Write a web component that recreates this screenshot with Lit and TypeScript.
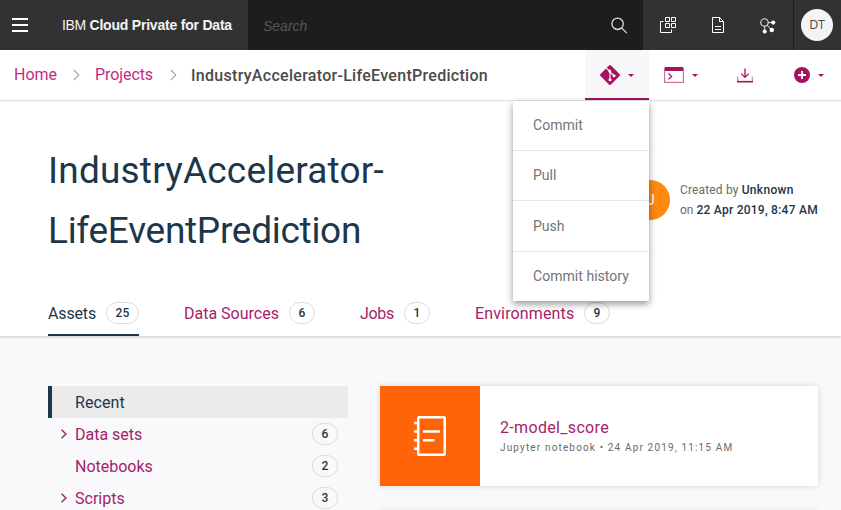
import { LitElement, html, css, nothing } from "lit";
import { customElement } from "lit/decorators.js";
import { classMap } from "lit/directives/class-map.js";

interface Tab { label: string; count: number; cls: string }
interface Row { label: string; count?: number; expandable?: boolean }

const TABS: Tab[] = [
  { label: "Assets", count: 25, cls: "t-assets" },
  { label: "Data Sources", count: 6, cls: "t-sources" },
  { label: "Jobs", count: 1, cls: "t-jobs" },
  { label: "Environments", count: 9, cls: "t-env" },
];

const ROWS: Row[] = [
  { label: "Recent" },
  { label: "Data sets", count: 6, expandable: true },
  { label: "Notebooks", count: 2 },
  { label: "Scripts", count: 3, expandable: true },
];

const MENU = ["Commit", "Pull", "Push", "Commit history"];

const caret = html`<svg class="caret" width="6" height="3" viewBox="0 0 6 3"><path d="M0 0h6L3 3z" fill="currentColor"/></svg>`;
const crumbArrow = html`<svg class="sep" width="7" height="12" viewBox="0 0 7 12"><path d="M.8 1l5 5-5 5" fill="none" stroke="#a4a4a4" stroke-width="1.1"/></svg>`;

@customElement("app-header")
export class AppHeader extends LitElement {
  static styles = css`
    :host { display: flex; height: 50px; background: #323232; color: #fff; font-family: "Liberation Sans", Arial, sans-serif; }
    svg { display: block; }
    .brand { width: 248px; box-sizing: border-box; display: flex; align-items: center; padding-left: 12px; }
    .name { margin-left: 34px; font-size: 14px; white-space: nowrap; letter-spacing: -0.32px; line-height: 18px; color: #f4f4f4; }
    .name b { letter-spacing: -0.21px; }
    .search { width: 395px; box-sizing: border-box; background: #1d1d1d; display: flex; align-items: center; justify-content: space-between; padding: 0 15px; }
    .hint { font-style: italic; font-size: 14px; color: #565656; padding-top: 1px; }
    .tools { flex: 1; display: flex; align-items: center; }
    .tool { width: 50px; display: flex; justify-content: center; }
    .user { flex: 1; align-self: stretch; display: flex; align-items: center; padding-left: 7px; border-left: 1px solid #1d1d1d; }
    .face { width: 32px; height: 32px; border-radius: 50%; background: #f4f4f4; color: #4a4a4a; font: 12.5px/32px "Open Sans", sans-serif; text-align: center; letter-spacing: -.2px; }
  `;
  render() {
    return html`
      <div class="brand">
        <svg width="16" height="14" viewBox="0 0 16 14"><path d="M0 0h16v2H0zM0 6h16v2H0zM0 12h16v2H0z" fill="#fff"/></svg>
        <div class="name">IBM <b>Cloud Private for Data</b></div>
      </div>
      <div class="search">
        <span class="hint">Search</span>
        <svg width="17" height="17" viewBox="0 0 17 17" fill="none" stroke="#e0e0e0" stroke-width="1.3"><circle cx="6.6" cy="6.8" r="5.7"/><path d="M10.600 10.900l5.200 5.200"/></svg>
      </div>
      <div class="tools">
        <div class="tool"><svg width="16" height="16" viewBox="0 0 16 16" fill="none" stroke="#fff"><path d="M5.500 .5h4v4h-4zM11.500 .5h4v4h-4zM5.500 6.500h4v4h-4zM11.500 6.500h4v4h-4zM3.500 4.500h-3v11h11v-3"/></svg></div>
        <div class="tool"><svg width="12" height="16" viewBox="0 0 12 16" fill="none" stroke="#fff"><path d="M.5.5h7l4 4v11H.5zM7.500 .5v4h4M3 9.500h6M3 12.500h6"/></svg></div>
        <div class="tool"><svg width="16" height="17" viewBox="0 -1 16 17" fill="none" stroke="#e8e8e8"><circle cx="4.500" cy="4.500" r="3.700" stroke-width="1.100"/><path d="M8 4.600h4M4.700 8.200v5M7 7.200l4.500 4.500"/><g fill="#fff" stroke="none"><circle cx="13.200" cy="4.600" r="2.100"/><circle cx="4.700" cy="13.400" r="2"/><circle cx="11.800" cy="12" r="2.200"/></g></svg></div>
        <div class="user"><div class="face">DT</div></div>
      </div>`;
  }
}

@customElement("action-bar")
export class ActionBar extends LitElement {
  static styles = css`
    :host { position: relative; z-index: 2; display: flex; height: 50px; background: #fff; border-bottom: 1px solid #e2e2e2; box-shadow: 0 1px 1px rgba(0,0,0,.04); font-family: Roboto, sans-serif; color: #a5125f; }
    svg { display: block; flex: none; }
    .trail { width: 585px; box-sizing: border-box; display: flex; align-items: center; padding: 0 0 1px 14px; font-size: 16px; white-space: nowrap; line-height: 20px; }
    .link { color: #c62a7f; }
    .home { width: 43px; }
    .projects { width: 58px; letter-spacing: -.08px; }
    .here { font-weight: 500; color: #4a4a4a; letter-spacing: .29px; padding-top: 2px; }
    .sep { margin: 1px 15px 0 16px; }
    .projects + .sep { margin-left: 17px; margin-right: 14px; }
    .git { width: 64px; height: 50px; box-sizing: border-box; background: #f7f7fa; border-bottom: 2px solid #a5125f; display: flex; align-items: center; padding: 2px 0 0 15px; }
    .git .caret { margin-left: 8px; }
    .act { display: flex; align-items: center; }
    .term { margin-left: 15px; }
    .term .caret { margin-left: 8px; }
    .down { margin-left: 39px; }
    .add { margin-left: 41px; }
    .add .caret { margin-left: 8px; }
    .menu { position: absolute; top: 51px; left: 513px; width: 136px; background: #fff; box-shadow: 0 3px 7px rgba(0,0,0,.42); font-size: 14px; color: #747474; }
    .item { height: 50px; box-sizing: border-box; padding-left: 20px; line-height: 48px; border-bottom: 1px solid #e6e6e6; letter-spacing: .02px; }
    .item:nth-child(3) { height: 51px; line-height: 50px; }
    .item:last-child { border-bottom: 0; height: 49px; letter-spacing: .04px; }
  `;
  render() {
    return html`
      <div class="trail">
        <span class="link home">Home</span>${crumbArrow}
        <span class="link projects">Projects</span>${crumbArrow}
        <span class="here">IndustryAccelerator-LifeEventPrediction</span>
      </div>
      <div class="git">
        <svg width="20" height="20" viewBox="0 0 20 20"><path d="M9 .5q1-.9 2 0L19.500 9q.9 1 0 2L11 19.500q-1 .9-2 0L.5 11q-.9-1 0-2z" fill="currentColor"/><path d="M5.500 2.500L10 6.500v8M10 7l4 3.800" stroke="#fff" fill="none" stroke-width="1.100"/><g fill="#fff"><circle cx="9.700" cy="6" r="1.500"/><circle cx="10" cy="14.800" r="1.500"/><circle cx="14" cy="10.700" r="1.500"/></g></svg>
        ${caret}
      </div>
      <div class="act term">
        <svg width="20" height="16" viewBox="0 0 20 16"><path d="M.6 1h18.800v14.400H.6z" fill="none" stroke="#cb74a1" stroke-width="1.200"/><path d="M1 0h18v4H1z" fill="currentColor"/><path d="M4.500 6.500L7.600 9.400l-3.100 3" fill="none" stroke="currentColor" stroke-width="1.300"/></svg>
        ${caret}
      </div>
      <div class="act down">
        <svg width="16" height="15" viewBox="0 0 16 15" fill="none" stroke="currentColor"><path d="M8 .5v9M4.300 5.600L8 9.400l3.700-3.800" stroke-width="1.300"/><path d="M.7 8.500v5M15.300 8.500v5" stroke="#d07fa9" stroke-width="1.200"/><path d="M0 13.700h16" stroke-width="1.600"/></svg>
      </div>
      <div class="act add">
        <svg width="16" height="16" viewBox="0 0 16 16"><circle cx="8" cy="8" r="8" fill="currentColor"/><path d="M8 4v8M4 8h8" stroke="#fff" stroke-width="1.800"/></svg>
        ${caret}
      </div>
      <div class="menu">${MENU.map((m) => html`<div class="item">${m}</div>`)}</div>`;
  }
}

@customElement("count-badge")
export class CountBadge extends LitElement {
  static properties = { value: { type: Number } };
  declare value: number;
  static styles = css`
    :host { display: block; flex: none; box-sizing: border-box; height: 22px; width: 26px; border: 1px solid #dcdcdc; border-radius: 11px; font: 500 12px/20px Roboto, sans-serif; color: #1d3649; text-align: center; letter-spacing: .2px; }
  `;
  render() { return html`${this.value}`; }
}

@customElement("app-root")
export class AppRoot extends LitElement {
  static styles = css`
    :host { display: block; width: 841px; height: 510px; overflow: hidden; background: #f9f9fb; font-family: Roboto, sans-serif; color: #1d3649; }
    svg { display: block; }
    .hero { height: 235px; background: #fff; box-sizing: border-box; box-shadow: 0 1px 3px rgba(0,0,0,.2); display: flex; flex-direction: column; justify-content: space-between; padding-top: 40px; }
    .top { display: flex; justify-content: space-between; padding: 0 23px 0 48px; }
    h1 { margin: 0; font-weight: 400; font-size: 37px; line-height: 60px; }
    .l1 { letter-spacing: .2px; }
    .l2 { letter-spacing: -.28px; }
    .made { display: flex; align-items: center; gap: 10px; width: 188px; height: 40px; margin-top: 39px; }
    .who { width: 40px; height: 40px; flex: none; border-radius: 50%; background: #ff8a12; color: #fff; text-align: center; font-size: 14px; line-height: 40px; }
    .info { font-size: 12px; line-height: 20px; color: #6a6a6a; white-space: nowrap; }
    .info b { font-weight: 500; color: #1d3649; }
    .by { letter-spacing: .15px; }
    .by b { letter-spacing: .33px; }
    .date b { letter-spacing: .25px; }
    .tabs { display: flex; gap: 45px; padding-left: 48px; }
    .tab { display: flex; align-items: flex-start; gap: 10px; height: 34px; box-sizing: border-box; font-size: 16px; line-height: 24px; color: #a5226b; white-space: nowrap; }
    .tab.on { color: #1d3649; border-bottom: 2px solid #1d3649; }
    .t-assets span { width: 48px; letter-spacing: -.15px; }
    .t-sources span { width: 95px; }
    .t-jobs span { width: 34px; letter-spacing: -.3px; }
    .t-env span { width: 99px; letter-spacing: .14px; }
    .t-assets count-badge { width: 33px; }
    .body { display: flex; gap: 32px; padding: 50px 23px 0 48px; }
    .side { width: 300px; }
    .row { display: flex; align-items: center; height: 32px; box-sizing: border-box; padding: 0 10px 0 12px; font-size: 16px; color: #a5226b; border-left: 0 solid #1d3649; }
    .row.on { background: #ebebeb; border-left-width: 4px; padding-left: 8px; color: #1d3649; letter-spacing: .1px; }
    .slot { width: 15px; }
    .label { flex: 1; }
    .cards { flex: 1; display: flex; flex-direction: column; gap: 26px; }
    .card { height: 100px; display: flex; background: #fff; box-shadow: 0 0 6px rgba(0,0,0,.15); }
    .thumb { width: 100px; background: #ff6408; display: flex; align-items: center; justify-content: center; }
    .text { padding: 32px 0 0 20px; }
    .title { font-size: 16px; line-height: 20px; color: #a5226b; letter-spacing: .33px; }
    .meta { font-size: 10px; line-height: 14px; margin-top: 3px; color: #6a6a6a; letter-spacing: 1.15px; }
  `;
  render() {
    return html`
      <app-header></app-header>
      <action-bar></action-bar>
      <section class="hero">
        <div class="top">
          <h1><span class="l1">IndustryAccelerator-</span><br><span class="l2">LifeEventPrediction</span></h1>
          <div class="made">
            <div class="who">U</div>
            <div class="info"><div class="by">Created by <b>Unknown</b></div><div class="date">on <b>22 Apr 2019, 8:47 AM</b></div></div>
          </div>
        </div>
        <nav class="tabs">
          ${TABS.map((t, i) => html`<div class=${classMap({ tab: true, on: i === 0, [t.cls]: true })}><span>${t.label}</span><count-badge .value=${t.count}></count-badge></div>`)}
        </nav>
      </section>
      <main class="body">
        <div class="side">
          ${ROWS.map((r, i) => html`<div class=${classMap({ row: true, on: i === 0 })}>
            <div class="slot">${r.expandable ? html`<svg width="8" height="10" viewBox="0 0 8 10"><path d="M1.500 .8L6 5 1.500 9.200" fill="none" stroke="#a5226b" stroke-width="1.400"/></svg>` : nothing}</div>
            <div class="label">${r.label}</div>
            ${r.count ? html`<count-badge .value=${r.count}></count-badge>` : nothing}
          </div>`)}
        </div>
        <div class="cards">
          <div class="card">
            <div class="thumb">
              <svg width="32" height="40" viewBox="0 0 32 40" fill="none" stroke="#fff">
                <rect x="4.200" y="1.200" width="26.500" height="37.500" rx="1" stroke-width="2.500"/>
                <path d="M0 7h4M0 15.500h4M0 24.200h4M0 32.800h4M9 15.500h17M9 24.200h11.500" stroke-width="2.600"/>
              </svg>
            </div>
            <div class="text"><div class="title">2-model_score</div><div class="meta">Jupyter notebook • 24 Apr 2019, 11:15 AM</div></div>
          </div>
          <div class="card"></div>
        </div>
      </main>`;
  }
}
